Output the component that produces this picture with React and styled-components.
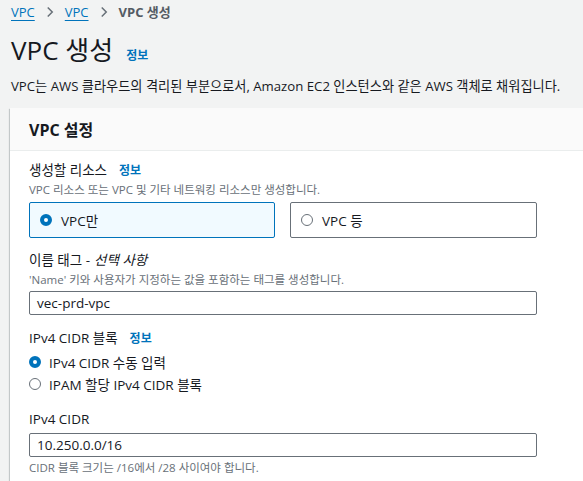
import React from 'react';
import styled, { createGlobalStyle } from 'styled-components';

const GlobalStyle = createGlobalStyle`
    body {
        margin: 0;
        background: #f2f3f3;
        font-family: "Open Sans", "Noto Sans CJK KR", sans-serif;
        color: #16191f;
        overflow: hidden;
    }
`;

const Page = styled.div`
    padding: 2px 0 0 10px;
`;

const Breadcrumbs = styled.nav`
    display: flex;
    align-items: center;
    gap: 9px;
    padding-left: 1px;
    font-size: 13px;
    line-height: 20px;
`;

const Crumb = styled.a`
    color: ${(p) => (p.current ? '#545b64' : '#0073bb')};
    font-weight: ${(p) => (p.current ? 700 : 400)};
    text-decoration: ${(p) => (p.current ? 'none' : 'underline')};
    text-underline-offset: 3px;
`;

const Chevron = styled.svg`
    width: 12px;
    height: 12px;
`;

const TitleRow = styled.div`
    display: flex;
    align-items: baseline;
    gap: 13px;
    margin-top: 12px;
    padding-left: 1px;
`;

const Title = styled.h1`
    margin: 0;
    font-size: 26px;
    line-height: 32px;
    font-weight: 400;
`;

const Info = styled.a`
    color: #0073bb;
    font-size: 12px;
    font-weight: 700;
    text-decoration: none;
    margin-left: ${(p) => p.gap || 0}px;
`;

const Lead = styled.p`
    margin: 10px 0 12px 1px;
    font-size: 13.2px;
    line-height: 20px;
    white-space: nowrap;
`;

const Card = styled.section`
    width: 640px;
    background: #fff;
    box-shadow: 0 1px 1px 0 rgba(0, 28, 36, 0.3), 1px 1px 1px 0 rgba(0, 28, 36, 0.15), -1px 1px 1px 0 rgba(0, 28, 36, 0.15);
`;

const CardHeader = styled.header`
    height: 42px;
    display: flex;
    align-items: center;
    padding-left: 19px;
    background: #fafafa;
    border-bottom: 1px solid #eaeded;
    font-size: 16px;
    font-weight: 700;
`;

const CardBody = styled.div`
    width: 508px;
    padding: 10px 19px 20px;
`;

const Label = styled.div`
    display: flex;
    align-items: baseline;
    font-size: 13.5px;
    line-height: 18px;
    margin-top: ${(p) => p.top || 0}px;
`;

const Hint = styled.div`
    font-size: 11.5px;
    line-height: 16px;
    color: #687078;
    margin-top: ${(p) => p.top || 0}px;
`;

const TileGrid = styled.div`
    display: grid;
    grid-template-columns: 246px 247px;
    gap: 15px;
    margin-top: 4px;
`;

const Tile = styled.label`
    height: 36px;
    box-sizing: border-box;
    display: flex;
    align-items: center;
    gap: 9px;
    padding-left: 10px;
    border: 1px solid ${(p) => (p.checked ? '#0073bb' : '#687078')};
    background: ${(p) => (p.checked ? '#f1faff' : '#fff')};
    border-radius: 2px;
    font-size: 13.5px;
`;

const Radio = styled.span`
    width: 12px;
    height: 12px;
    box-sizing: border-box;
    border-radius: 50%;
    flex: none;
    border: ${(p) => (p.checked ? '4px solid #0073bb' : '1px solid #687078')};
    background: #fff;
`;

const RadioRow = styled.label`
    height: 22px;
    display: flex;
    align-items: center;
    gap: 8px;
    font-size: 13.5px;
`;

const RadioList = styled.div`
    margin-top: 3px;
`;

const Input = styled.div`
    height: 24px;
    box-sizing: border-box;
    border: 1px solid #687078;
    border-radius: 2px;
    display: flex;
    align-items: center;
    padding-left: 7px;
    font-size: 13.5px;
    margin-top: ${(p) => p.top || 3}px;
`;

const Italic = styled.i`
    margin-left: 4px;
`;

const ChevronIcon = () => (
    <Chevron viewBox="0 0 16 16">
        <path d="M5 2l6 6-6 6" fill="none" stroke="#687078" strokeWidth="2" />
    </Chevron>
);

const App = () => (
    <>
        <GlobalStyle />
        <Page>
            <Breadcrumbs>
                <Crumb>VPC</Crumb>
                <ChevronIcon />
                <Crumb>VPC</Crumb>
                <ChevronIcon />
                <Crumb current>VPC 생성</Crumb>
            </Breadcrumbs>
            <TitleRow>
                <Title>VPC 생성</Title>
                <Info>정보</Info>
            </TitleRow>
            <Lead>VPC는 AWS 클라우드의 격리된 부분으로서, Amazon EC2 인스턴스와 같은 AWS 객체로 채워집니다.</Lead>
            <Card>
                <CardHeader>VPC 설정</CardHeader>
                <CardBody>
                    <Label>생성할 리소스<Info gap={12}>정보</Info></Label>
                    <Hint top={2}>VPC 리소스 또는 VPC 및 기타 네트워킹 리소스만 생성합니다.</Hint>
                    <TileGrid>
                        <Tile checked><Radio checked />VPC만</Tile>
                        <Tile><Radio />VPC 등</Tile>
                    </TileGrid>
                    <Label top={13}>이름 태그 -<Italic>선택 사항</Italic></Label>
                    <Hint top={3}>'Name' 키와 사용자가 지정하는 값을 포함하는 태그를 생성합니다.</Hint>
                    <Input>vec-prd-vpc</Input>
                    <Label top={14}>IPv4 CIDR 블록<Info gap={12}>정보</Info></Label>
                    <RadioList>
                        <RadioRow><Radio checked />IPv4 CIDR 수동 입력</RadioRow>
                        <RadioRow><Radio />IPAM 할당 IPv4 CIDR 블록</RadioRow>
                    </RadioList>
                    <Label top={15}>IPv4 CIDR</Label>
                    <Input top={5}>10.250.0.0/16</Input>
                    <Hint top={3}>CIDR 블록 크기는 /16에서 /28 사이여야 합니다.</Hint>
                </CardBody>
            </Card>
        </Page>
    </>
);

export default App;
